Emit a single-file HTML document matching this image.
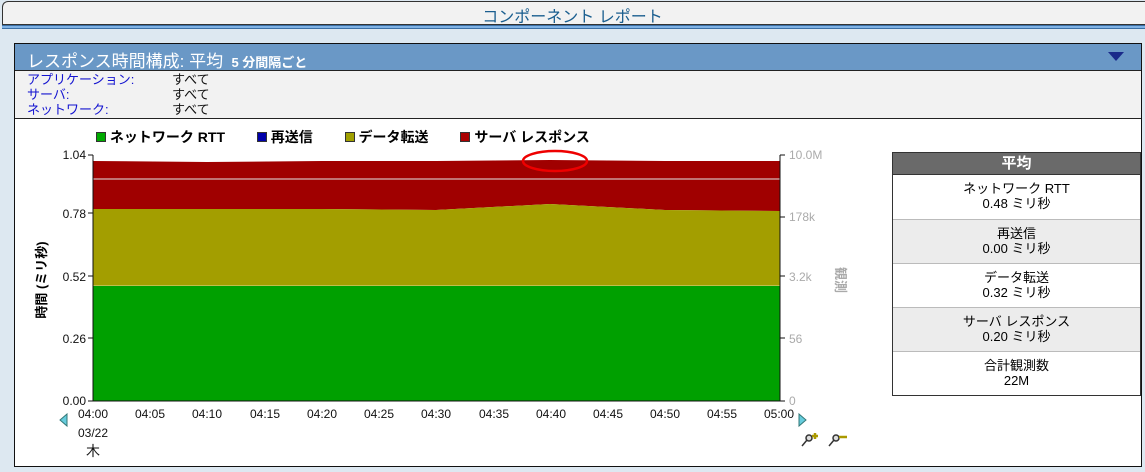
<!DOCTYPE html>
<html><head><meta charset="utf-8"><style>
*{margin:0;padding:0;box-sizing:border-box}
body{width:1145px;height:472px;background:#dde8f1;font-family:"Liberation Sans","Noto Sans CJK JP",sans-serif;position:relative;overflow:hidden}
.a{position:absolute}
.top{left:2px;top:1px;width:1145px;height:24px;background:#f2f2f2;border:1px solid #333;border-radius:6px 0 0 0;border-right:none}
.title{left:0;width:1145px;top:3px;text-align:center;color:#1a5e8f;font-size:16px}
.bl{left:2px;top:25px;width:1145px;height:4px;background:#7fb2e5;border-top:1px solid #3b6fa5;border-bottom:1px solid #3b6fa5}
.panel{left:14px;top:43px;width:1128px;height:424px;background:#fff;border:1px solid #111}
.hdr{left:15px;top:44px;width:1126px;height:27px;background:#6a98c6;border-bottom:1px solid #222;color:#fff;font-size:17px;padding:3px 0 0 12px;white-space:nowrap}
.info{left:15px;top:71px;width:1126px;height:48px;background:#f2f2f2;border-bottom:1px solid #222;font-size:13px;line-height:15px}
.tbl{left:892px;top:152px;width:249px;border:1px solid #333;font-size:13px;text-align:center;line-height:15px}
.tbl div.r{border-top:1px solid #bbb;height:44px;padding-top:6px}
</style></head><body>
<div class="a top"></div>
<div class="a title">コンポーネント レポート</div>
<div class="a bl"></div>
<div class="a panel"></div>
<div class="a hdr">レスポンス時間構成: 平均 <span style="font-size:13px;font-weight:bold">&nbsp;5 分間隔ごと</span></div>
<svg class="a" style="left:1108px;top:52px" width="16" height="10"><path d="M0 0H16L8 9Z" fill="#1a2a8a"/></svg>
<div class="a info">
<div class="a" style="left:12px;top:1px;color:#1414d0">アプリケーション:<br>サーバ:<br>ネットワーク:</div>
<div class="a" style="left:157px;top:1px;color:#111">すべて<br>すべて<br>すべて</div>
</div>
<div class="a" style="left:96px;top:127px;font-size:14px;font-weight:bold;white-space:nowrap">
<span style="display:inline-block;width:10px;height:10px;background:#0a0;border:1px solid #333"></span> ネットワーク RTT
<span style="margin-left:28px;display:inline-block;width:10px;height:10px;background:#00a;border:1px solid #333"></span> 再送信
<span style="margin-left:28px;display:inline-block;width:10px;height:10px;background:#a0a000;border:1px solid #333"></span> データ転送
<span style="margin-left:28px;display:inline-block;width:10px;height:10px;background:#a00;border:1px solid #333"></span> サーバ レスポンス
</div>
<svg class="a" style="left:0;top:140px" width="890" height="332" font-family="Liberation Sans, sans-serif" font-size="12">
<polygon points="93,21 207,22 322,21 436,21 550,20 665,21 780,21 780,71 665,70 550,64 436,70 322,69 207,69 93,69" fill="#a00000"/>
<line x1="93" y1="39" x2="780" y2="39" stroke="#c99" stroke-width="1.5"/>
<polygon points="93,69 207,69 322,69 436,70 550,64 665,70 780,71 780,146 93,146" fill="#a39e00"/>
<line x1="93" y1="146" x2="780" y2="146" stroke="#dd9" stroke-width="1"/>
<rect x="93" y="146" width="687" height="115" fill="#00a000"/>
<path d="M93 15V261H780V15" fill="none" stroke="#111"/>
<g stroke="#111"><line x1="88" y1="15" x2="93" y2="15"/><line x1="88" y1="73" x2="93" y2="73"/><line x1="88" y1="136" x2="93" y2="136"/><line x1="88" y1="198" x2="93" y2="198"/><line x1="88" y1="261" x2="93" y2="261"/>
<line x1="780" y1="15" x2="785" y2="15"/><line x1="780" y1="77" x2="785" y2="77"/><line x1="780" y1="136" x2="785" y2="136"/><line x1="780" y1="198" x2="785" y2="198"/><line x1="780" y1="261" x2="785" y2="261"/></g>
<g text-anchor="end" fill="#111"><text x="86" y="19">1.04</text><text x="86" y="78">0.78</text><text x="86" y="141">0.52</text><text x="86" y="203">0.26</text><text x="86" y="265">0.00</text></g>
<g fill="#aaa"><text x="789" y="19">10.0M</text><text x="789" y="81">178k</text><text x="789" y="141">3.2k</text><text x="789" y="203">56</text><text x="789" y="265">0</text></g>
<text transform="translate(46,140) rotate(-90)" text-anchor="middle" font-weight="bold" font-size="13" font-family="Liberation Sans, Noto Sans CJK JP, sans-serif">時間 (ミリ秒)</text>
<text transform="translate(836,140) rotate(90)" text-anchor="middle" font-weight="bold" font-size="13" fill="#aaa" font-family="Liberation Sans, Noto Sans CJK JP, sans-serif">観測</text>
<g text-anchor="middle" fill="#111">
<text x="93" y="278">04:00</text><text x="150" y="278">04:05</text><text x="207" y="278">04:10</text><text x="265" y="278">04:15</text><text x="322" y="278">04:20</text><text x="379" y="278">04:25</text><text x="436" y="278">04:30</text><text x="494" y="278">04:35</text><text x="551" y="278">04:40</text><text x="608" y="278">04:45</text><text x="665" y="278">04:50</text><text x="722" y="278">04:55</text><text x="779" y="278">05:00</text>
<text x="93" y="297">03/22</text><text x="93" y="316" font-size="14" font-family="Liberation Sans, Noto Sans CJK JP, sans-serif">木</text></g>
<path d="M67 274L60 280L67 286Z" fill="#6cd" stroke="#377"/>
<path d="M799 274L806 280L799 286Z" fill="#6cd" stroke="#377"/>
<ellipse cx="555" cy="21" rx="32" ry="10" fill="none" stroke="#e00" stroke-width="2.5"/>
<g stroke="#333" stroke-width="1.5" fill="#ddd"><circle cx="809" cy="298" r="3"/><line x1="807" y1="300" x2="802" y2="306"/><circle cx="836" cy="298" r="3"/><line x1="834" y1="300" x2="829" y2="306"/></g>
<path d="M812 296h6M815 293v6" stroke="#a90" stroke-width="2.5"/><path d="M839 297h8" stroke="#a90" stroke-width="2.5"/>
</svg>
<div class="a tbl">
<div style="background:#6a6a6a;color:#fff;font-weight:bold;font-size:15px;height:22px;line-height:22px;border-bottom:1px solid #333">平均</div>
<div class="r" style="border-top:none">ネットワーク RTT<br>0.48 ミリ秒</div>
<div class="r" style="background:#ececec">再送信<br>0.00 ミリ秒</div>
<div class="r">データ転送<br>0.32 ミリ秒</div>
<div class="r" style="background:#ececec">サーバ レスポンス<br>0.20 ミリ秒</div>
<div class="r">合計観測数<br>22M</div>
</div>
</body></html>
